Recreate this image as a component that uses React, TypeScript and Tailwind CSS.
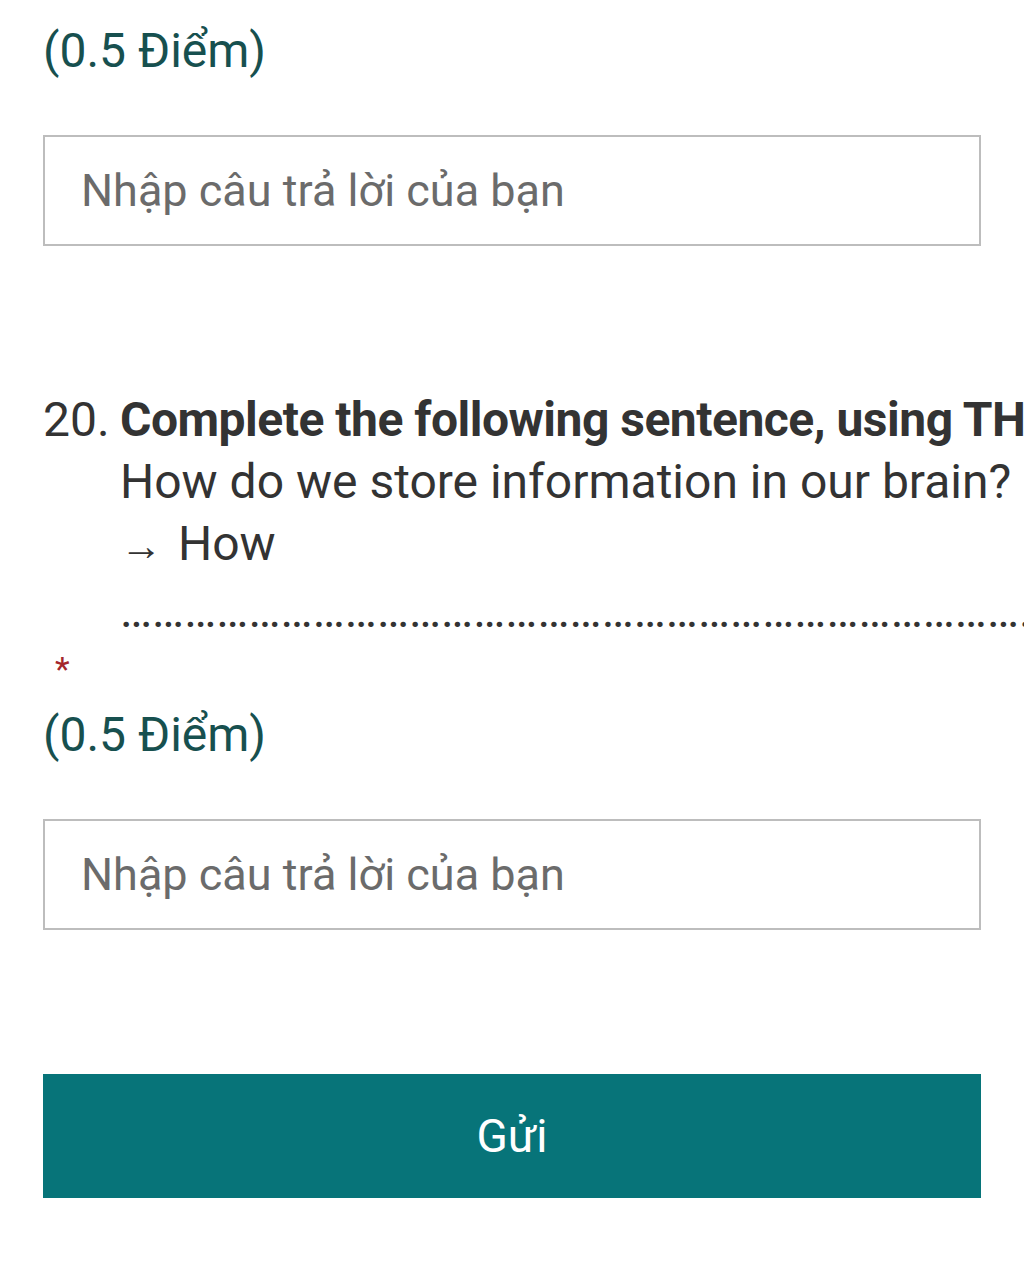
export default function App() {
  const dots = '…'.repeat(40);
  return (
    <div className="min-h-[1280px] w-[1024px] overflow-hidden bg-white px-[43px] font-['Roboto',sans-serif]">
      {/* Previous question tail */}
      <div className="pt-[20px] text-[48px] leading-[62px] text-[#17504f]">(0.5 Điểm)</div>
      <div className="mt-[53px] flex h-[111px] w-[938px] items-center border-2 border-[#bdbdbd] px-[36px] text-[45px] text-[#6b6b6b]">
        Nhập câu trả lời của bạn
      </div>

      {/* Question 20 */}
      <div className="mt-[143px] flex whitespace-nowrap text-[48px] leading-[62px] text-[#333333]">
        <span className="w-[77px] shrink-0">20.</span>
        <div>
          <div className="font-bold tracking-[-0.5px]">Complete the following sentence, using THE WORD GIVEN</div>
          <div>How do we store information in our brain?</div>
          <div>
            <span className="mr-[16px] text-[42px]">→</span>How
          </div>
          <div className="mt-[14px] leading-[40px]">{dots}</div>
        </div>
      </div>
      <div className="ml-[12px] mt-[18px] text-[34px] leading-[40px] text-[#a4262c]">*</div>
      <div className="mt-[15px] text-[48px] leading-[62px] text-[#17504f]">(0.5 Điểm)</div>
      <div className="mt-[53px] flex h-[111px] w-[938px] items-center border-2 border-[#bdbdbd] px-[36px] text-[45px] text-[#6b6b6b]">
        Nhập câu trả lời của bạn
      </div>

      <button className="mt-[144px] flex h-[124px] w-[938px] items-center justify-center bg-[#077479] text-[46px] text-white">
        Gửi
      </button>
    </div>
  );
}
